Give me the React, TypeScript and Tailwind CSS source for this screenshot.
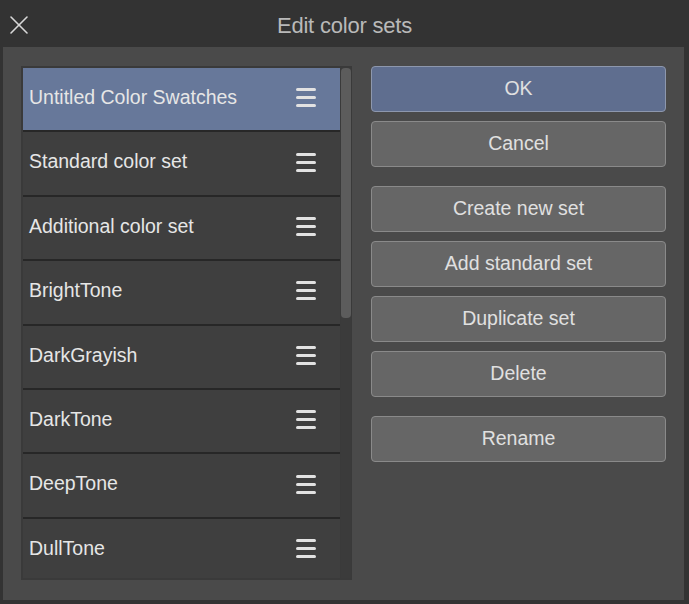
import { X } from "lucide-react";

const sets = [
  "Untitled Color Swatches",
  "Standard color set",
  "Additional color set",
  "BrightTone",
  "DarkGrayish",
  "DarkTone",
  "DeepTone",
  "DullTone",
];

const actions = [
  { label: "OK", primary: true, gap: false },
  { label: "Cancel", primary: false, gap: false },
  { label: "Create new set", primary: false, gap: true },
  { label: "Add standard set", primary: false, gap: false },
  { label: "Duplicate set", primary: false, gap: false },
  { label: "Delete", primary: false, gap: false },
  { label: "Rename", primary: false, gap: true },
];

function Handle() {
  return (
    <div className="flex flex-col gap-[5px] w-[20px]">
      <span className="h-[3px] rounded-full bg-[#e2e2e2]" />
      <span className="h-[3px] rounded-full bg-[#e2e2e2]" />
      <span className="h-[3px] rounded-full bg-[#e2e2e2]" />
    </div>
  );
}

export default function App() {
  return (
    <div
      className="w-[689px] h-[604px] bg-[#333333] flex flex-col overflow-hidden"
      style={{ fontFamily: '"Liberation Sans", Arial, sans-serif' }}
    >
      {/* title bar */}
      <div className="relative h-[47px] flex items-center justify-center shrink-0">
        <button type="button" className="absolute left-[3px] top-[9px] text-[#d8d8d8]">
          <X size={32} strokeWidth={1.2} />
        </button>
        <p className="text-[22px] text-[#b9b9b9] mt-[4px] tracking-[-0.2px]">Edit color sets</p>
      </div>

      <div className="mx-[3px] mr-[5px] h-[553px] bg-[#4a4a4a] flex pt-[19px] pl-[18px]">
        {/* list */}
        <div className="w-[331px] h-[514px] bg-[#3a3a3a] flex p-[2px] pr-[1px]">
          <div className="flex-1 flex flex-col overflow-hidden">
            {sets.map((name, i) => (
              <div
                key={name}
                className={
                  "h-[64.4px] shrink-0 flex items-center justify-between pl-[6px] pr-[24px] pb-[3px] border-b-2 border-[#272727] " +
                  (i === 0 ? "bg-[#67789a]" : "bg-[#3f3f3f]")
                }
              >
                <span className="text-[19.5px] text-[#e6e6e6]">{name}</span>
                <Handle />
              </div>
            ))}
          </div>
          <div className="w-[10px] ml-[1px] bg-[#3b3b3b] flex flex-col">
            <div className="h-[250px] bg-[#5c5c5c] rounded-sm" />
          </div>
        </div>

        {/* actions */}
        <div className="w-[295px] ml-[19px] flex flex-col">
          {actions.map((a) => (
            <button
              key={a.label}
              type="button"
              className={
                "h-[46px] mb-[9px] rounded-[4px] border text-[19.5px] text-[#e0e0e0] " +
                (a.gap ? "mt-[10px] " : "") +
                (a.primary
                  ? "bg-[#5f6e8f] border-[#8d97ad]"
                  : "bg-[#666666] border-[#8a8a8a]")
              }
            >
              {a.label}
            </button>
          ))}
        </div>
      </div>
    </div>
  );
}
